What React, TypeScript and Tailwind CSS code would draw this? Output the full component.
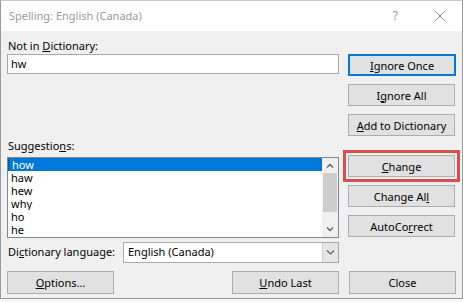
import React from "react";

const font = { fontFamily: '"Noto Sans", "Open Sans", Arial, sans-serif' };

function Btn({
  children,
  primary,
  className = "",
}: {
  children: React.ReactNode;
  primary?: boolean;
  className?: string;
}) {
  return (
    <button
      className={
        "h-[22px] w-[107px] flex items-center justify-center bg-[#e1e1e1] text-[11px] leading-none text-black whitespace-nowrap " +
        (primary ? "border-2 border-[#0078d7] " : "border border-[#adadad] ") +
        className
      }
    >
      {children}
    </button>
  );
}

const suggestions = ["how", "haw", "hew", "why", "ho", "he"];

export default function App() {
  return (
    <div className="w-[463px] h-[302px] bg-[#f7f7f7]" style={font}>
      <div className="w-[463px] h-[299px] bg-[#f0f0f0] border border-[#9a9a9a] border-t-[#c8c8c8] flex flex-col">
        {/* title bar */}
        <div className="h-[30px] bg-white flex items-center justify-between pl-[8px] pr-[16px]">
          <span className="text-[11px] text-[#9b9b9b]">Spelling: English (Canada)</span>
          <div className="flex items-center gap-[36px] text-[#9a9a9a]">
            <span className="text-[12px]">?</span>
            <svg width="12" height="12" viewBox="0 0 12 12" stroke="#8a8a8a" strokeWidth="1">
              <path d="M1 1 L11 11 M11 1 L1 11" />
            </svg>
          </div>
        </div>

        <div className="flex pl-[6px]">
          {/* left column */}
          <div className="w-[332px] flex flex-col">
            <div className="mt-[7px] h-[16px] text-[11px] leading-[16px] pl-[1px]">
              Not in <u>D</u>ictionary:
            </div>
            <div className="h-[20px] bg-white border border-[#a9a9a9] text-[11px] leading-[18px] pl-[3px]">
              hw
            </div>

            <div className="mt-[64px] h-[16px] text-[11px] leading-[16px] pl-[1px]">
              Suggestio<u>n</u>s:
            </div>
            <div className="mt-[3px] h-[81px] bg-white border border-[#828790] flex">
              <div className="flex-1 flex flex-col">
                {suggestions.map((s, i) => (
                  <div
                    key={s}
                    className={
                      "h-[13px] text-[11px] leading-[13px] pl-[3px] overflow-hidden " +
                      (i === 0 ? "bg-[#0078d7] text-white border-l border-dotted border-[#333]" : "text-black")
                    }
                  >
                    {s}
                  </div>
                ))}
              </div>
              <div className="w-[16px] bg-[#f0f0f0] flex flex-col">
                <div className="h-[15px] flex items-center justify-center">
                  <svg width="8" height="5" viewBox="0 0 8 5" fill="none" stroke="#606060" strokeWidth="1.3">
                    <path d="M1 4.5 L4 1.5 L7 4.5" />
                  </svg>
                </div>
                <div className="mx-[1px] h-[39px] bg-[#cdcdcd]" />
                <div className="flex-1" />
                <div className="h-[15px] flex items-center justify-center">
                  <svg width="8" height="5" viewBox="0 0 8 5" fill="none" stroke="#606060" strokeWidth="1.3">
                    <path d="M1 0.5 L4 3.5 L7 0.5" />
                  </svg>
                </div>
              </div>
            </div>

            <div className="mt-[4px] h-[21px] flex items-center">
              <span className="w-[116px] text-[11px] pl-[1px] whitespace-nowrap">
                Di<u>c</u>tionary language:
              </span>
              <div className="flex-1 h-[21px] bg-white border border-[#a9a9a9] flex items-center">
                <span className="flex-1 text-[11px] pl-[4px]">English (Canada)</span>
                <div className="w-[16px] h-[19px] bg-[#e5e5e5] border-l border-[#d0d0d0] flex items-center justify-center">
                  <svg width="9" height="5" viewBox="0 0 9 5" fill="none" stroke="#606060" strokeWidth="1.2">
                    <path d="M1 0.5 L4.5 4 L8 0.5" />
                  </svg>
                </div>
              </div>
            </div>
          </div>

          {/* right column */}
          <div className="ml-[9px] flex flex-col pt-[23px]">
            <Btn primary className="w-[108px]">
              <u>I</u>gnore Once
            </Btn>
            <Btn className="mt-[8px]">
              I<u>g</u>nore All
            </Btn>
            <Btn className="mt-[8px]">
              <u>A</u>dd to Dictionary
            </Btn>
            <div className="relative mt-[19px]">
              <Btn>
                <u>C</u>hange
              </Btn>
              <div className="absolute -top-[5px] -bottom-[5px] -left-[5px] -right-[4px] border-[3px] border-[#d9514e]" />
            </div>
            <Btn className="mt-[8px]">
              Change Al<u>l</u>
            </Btn>
            <Btn className="mt-[8px]">
              AutoCo<u>r</u>rect
            </Btn>
          </div>
        </div>

        {/* bottom buttons */}
        <div className="mt-[8px] flex pl-[6px]">
          <Btn className="h-[23px]">
            <u>O</u>ptions...
          </Btn>
          <Btn className="h-[23px] ml-[118px]">
            <u>U</u>ndo Last
          </Btn>
          <Btn className="h-[23px] ml-[10px]">Close</Btn>
        </div>
      </div>
    </div>
  );
}
